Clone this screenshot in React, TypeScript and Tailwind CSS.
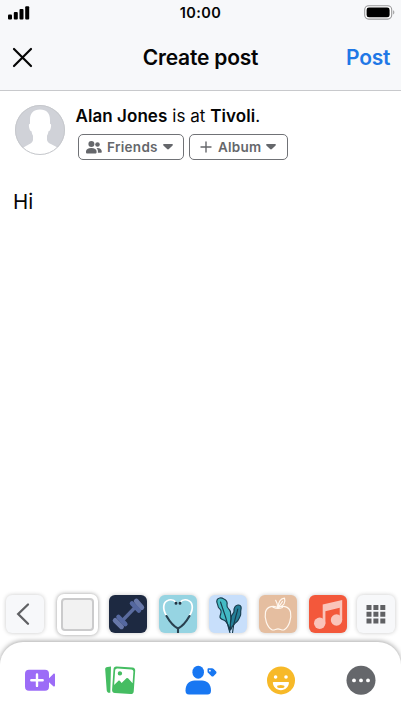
import type { ReactNode } from "react";

function StatusBar() {
  return (
    <div className="relative flex h-[26px] items-center justify-between pl-2 pr-[6px]">
      <svg width="22" height="14" viewBox="0 0 22 14" className="mt-[-1px]">
        <rect x="0" y="8.5" width="4" height="5" rx="1" />
        <rect x="5.8" y="6" width="4" height="7.5" rx="1" />
        <rect x="11.5" y="3" width="4" height="10.5" rx="1" />
        <rect x="17.2" y="0.3" width="4" height="13.2" rx="1" />
      </svg>
      <span className="absolute inset-x-0 text-center text-[14.5px] font-semibold leading-[26px] tracking-[0.45px]">
        10:00
      </span>
      <svg width="31" height="15" viewBox="0 0 31 15" className="mt-[-2px]">
        <rect x="0.7" y="0.7" width="27" height="13.4" rx="4" fill="#fff" stroke="#98989a" strokeWidth="1.1" />
        <rect x="2.6" y="2.5" width="23" height="9.8" rx="2.4" fill="#000" />
        <path d="M29.2 5.2c1.5.6 1.5 3.8 0 4.4z" fill="#98989a" />
      </svg>
    </div>
  );
}

function Header() {
  return (
    <header className="h-[91px] border-b border-[#c8c9cc] bg-[#f7f8fa]">
      <StatusBar />
      <div className="relative flex h-[64px] items-center justify-between pl-[12px] pr-[11px]">
        <button aria-label="Close" className="mt-[-1px]">
          <svg width="21" height="21" viewBox="0 0 21 21" fill="none" stroke="#050505" strokeWidth="2.2" strokeLinecap="round">
            <path d="M2 2l17 17M19 2L2 19" />
          </svg>
        </button>
        <h1 className="pointer-events-none absolute inset-x-0 text-center text-[21px] font-semibold leading-[64px] tracking-[-0.2px]">
          Create post
        </h1>
        <button className="text-[21px] font-semibold tracking-[-0.3px] text-[#1f78e6]">Post</button>
      </div>
    </header>
  );
}

function Caret() {
  return (
    <svg width="10" height="6" viewBox="0 0 10 6" fill="#65676b">
      <path d="M1 0h8c.9 0 1.2.8.6 1.4L5.9 5.1c-.5.5-1.3.5-1.8 0L.4 1.4C-.2.8.1 0 1 0z" />
    </svg>
  );
}

function Author() {
  return (
    <section className="flex pl-[15px] pt-[14px]">
      <svg width="50" height="50" viewBox="0 0 50 50" className="shrink-0">
        <defs>
          <clipPath id="avatar">
            <circle cx="25" cy="25" r="25" />
          </clipPath>
        </defs>
        <g clipPath="url(#avatar)">
          <rect width="50" height="50" fill="#d0d2d8" />
          <path
            fill="#fff"
            d="M25 4.5C18.2 4.5 14.800 8.5 15 15.5v3.200c-1.400.2-1.300 2-.7 4.500.5 1.800 1.200 2.900 2.200 3.100.3 1.900.8 3.300 1.500 4.500v4.200c-.5 4-6 4.500-11.500 9V52h38v-8c-5.500-4.500-12-5-12.500-9v-4.200c.7-1.200 1.200-2.600 1.500-4.500 1-.2 1.700-1.300 2.200-3.100.6-2.500.7-4.300-.7-4.500v-3.200c.2-7-3.200-11-10-11z"
          />
        </g>
        <circle cx="25" cy="25" r="24.5" fill="none" stroke="#c6c8cc" />
      </svg>
      <div className="pl-[11px]">
        <p className="ml-[-0.5px] text-[17px] leading-[22px] tracking-[0.06px]">
          <b className="font-semibold">Alan Jones</b> is at <b className="font-semibold">Tivoli</b>.
        </p>
        <div className="ml-[2px] mt-[7px] flex gap-[5px] text-[13.5px] font-semibold text-[#65676b]">
          <button className="flex h-[26px] w-[106px] items-center rounded-[5px] border-[1.5px] border-[#707276] pl-[7px]">
            <svg width="16" height="13" viewBox="0 0 16 13" fill="#65676b">
              <circle cx="5.4" cy="3" r="3" />
              <circle cx="11.5" cy="3.5" r="2.3" />
              <path d="M0 10.5C0 8.3 2 6.9 5.3 6.900s5.300 1.400 5.300 3.600v.7c0 .8-.5 1.300-1.300 1.300h-8C.5 12.500 0 12 0 11.200z" />
              <path d="M10.5 7c3.400-.4 5.300 1.400 5.300 3.700 0 .7-.4 1.100-1 1.100h-3c.4-1.900 0-3.500-1.300-4.800z" />
            </svg>
            <span className="ml-[5px] mr-[5px] tracking-[0.3px]">Friends</span>
            <Caret />
          </button>
          <button className="flex h-[26px] w-[99px] items-center rounded-[5px] border-[1.5px] border-[#707276] pl-[10px]">
            <svg width="12" height="12" viewBox="0 0 12 12" fill="none" stroke="#65676b" strokeWidth="1.4" strokeLinecap="round">
              <path d="M6 1v10M1 6h10" />
            </svg>
            <span className="ml-[6px] mr-[5px] tracking-[0.25px]">Album</span>
            <Caret />
          </button>
        </div>
      </div>
    </section>
  );
}

function Tile({ className, children }: { className: string; children?: ReactNode }) {
  return (
    <button className={`h-[38px] w-[38px] shrink-0 overflow-hidden rounded-[6px] shadow-[0_0_4px_rgba(0,0,0,0.22)] ${className}`}>
      <svg width="38" height="38" viewBox="0 0 38 38" fill="none">
        {children}
      </svg>
    </button>
  );
}

function Backgrounds() {
  return (
    <div className="flex h-[48px] items-center pl-[6px]">
      <Tile className="bg-[#f7f8fa]">
        <path d="M22 9.500L12.200 19l9.800 9.700" stroke="#606164" strokeWidth="2.3" strokeLinecap="round" />
      </Tile>
      <button aria-label="No background" className="ml-[13px] h-[41px] w-[41px] shrink-0 rounded-[7px] bg-white p-[4px] shadow-[0_0_4px_rgba(0,0,0,0.4)]">
        <span className="block h-full w-full rounded-[4px] border-2 border-[#cbcbcc] bg-[#f2f2f2]" />
      </button>
      <Tile className="ml-[11px] bg-[#1d2941]">
        <path d="M13.500 25.500L26 12.500" stroke="#5a6b9e" strokeWidth="3.4" />
        <path d="M6.200 25.500l6.300 6.200M27.300 6.200l5.400 6.300" stroke="#6878a9" strokeWidth="5" strokeLinecap="round" />
        <path d="M9.500 22l6.800 7M23 8.500l6.800 7" stroke="#5568a0" strokeWidth="4.6" strokeLinecap="round" />
      </Tile>
      <Tile className="ml-[12px] bg-[#96d4e2]">
        <g strokeLinecap="round" strokeLinejoin="round">
          <path d="M17 7.500C13.500 2.800 5.700 4.500 4.800 10.800c-.5 3.500.7 6.700 2.700 10M21 7.500c3.500-4.700 11.300-3 12.200 3.300.5 3.500-.7 6.700-2.700 10" stroke="#fff" strokeWidth="1.7" />
          <path d="M7.500 21c3 5.300 6.500 10 11.500 12.500 5-2.500 8.500-7.200 11.500-12.500M19 33.500V39" stroke="#29404f" strokeWidth="2.1" />
          <path d="M17 8.100v.3M21 8.100v.3" stroke="#243443" strokeWidth="2.8" />
        </g>
      </Tile>
      <Tile className="ml-[12px] bg-[#c8dffb]">
        <g stroke="#173b4c" strokeWidth="1.15" strokeLinejoin="round" strokeLinecap="round">
          <path d="M21.500 35c-.8-6 .3-10 1-14 .5-2 2.600-2.500 2.500-4.700-.2-3.300 1-5.800 4-6.300 3-.4 3.800 2.500 2.800 5.500-.5 2 .7 3.500-.8 6-.9 1.500-1.200 3.500-3.500 5.500-2 1.700-4.500 3.500-6 8z" fill="#247f98" />
          <path d="M20.500 35c-.8-4-1.800-7.200-4.700-9.500-2.500-1-5.200-1.400-4.800-4 .4-2.500 1.800-4 .8-6.200-.8-1.800-2.600-2-2.800-4.300C8.800 8.900 7 7.500 8 5c1-2.200 4.300-2.700 6.500-1.300C17.500 5 18.700 7 18 10c-.5 2.500 1 3.500 2.500 5 1.900 2 .8 4 1.200 6 .6 3.500-.8 8-.8 14z" fill="#43bac4" />
          <path d="M11.500 7c3 8 5.500 15 9.500 31M28.800 14c-1.500 7-4.500 13-5.300 24" />
        </g>
      </Tile>
      <Tile className="ml-[12px] bg-[#e5bea0]">
        <g stroke="#fff7ef" strokeWidth="1.2" strokeLinecap="round" strokeLinejoin="round">
          <path d="M19 12.800c-3.500-2.600-11-2-12.500 4.200-1.300 6.500 1.500 15 6.300 17.700 1.900 1.100 4-.9 6.200-.9s4.300 2 6.200.9c4.800-2.700 7.600-11.200 6.300-17.700-1.500-6.200-9-6.800-12.500-4.200z" />
          <path d="M14 12.300c2.500 1.200 7 1.300 9.500.2M18.700 12.500c-.1-3-.5-5-2-7.200M19.700 12c-.8-4.600 1.500-8.300 5.800-8.800 1.500 4.500-1 8-5.800 8.800zM20 11.500L23.500 6.500" />
        </g>
      </Tile>
      <Tile className="ml-[12px] bg-[#f3583b]">
        <g fill="#fac4ba">
          <circle cx="10.7" cy="28.3" r="5.7" />
          <circle cx="27.5" cy="25" r="5.7" />
          <path d="M13.700 9.500L33.200 5v20h-2.500V12.700l-14.300 3.500v12.300h-2.700z" />
        </g>
      </Tile>
      <Tile className="ml-[10px] bg-[#f7f8fa]">
        <path d="M9.500 10h5v5h-5zM16.400 10h5v5h-5zM23.300 10h5v5h-5zM9.500 16.700h5v5h-5zM16.400 16.700h5v5h-5zM23.300 16.700h5v5h-5zM9.500 23.400h5v5h-5zM16.400 23.400h5v5h-5zM23.300 23.400h5v5h-5z" fill="#606164" />
      </Tile>
    </div>
  );
}

function Attachments() {
  return (
    <nav className="relative flex h-[70px] items-center justify-between rounded-t-[23px] bg-white px-[20px] pt-[6px] shadow-[0_-1px_5px_rgba(0,0,0,0.35)]">
      <svg width="40" height="40" viewBox="0 0 40 40">
        <rect x="5" y="9.7" width="24" height="21" rx="4" fill="#9c6cf7" />
        <path d="M29 18.200l4.300-4.200c.7-.7 1.700-.4 1.700.6v11c0 1-1 1.300-1.700.6L29 22.200z" fill="#9c6cf7" />
        <path d="M17 14.500v11.400M11.300 20.200h11.400" stroke="#fff" strokeWidth="2.4" strokeLinecap="round" />
      </svg>
      <svg width="40" height="40" viewBox="0 0 40 40">
        <path d="M11 6.500L7.500 7C5.900 7.200 5 8 5.200 9.600l1.500 20.600c.1 1.500 1 2.600 2.600 2.600h1z" fill="#45bd62" />
        <g transform="rotate(4 24 20)">
          <rect x="12.8" y="7" width="21.7" height="26.5" rx="3" fill="#45bd62" />
          <path d="M14.500 11.200c0-1.500.8-2.300 2.300-2.300h13.700c1.500 0 2.300.8 2.300 2.300v11.500l-4.600-4.500c-.6-.7-1.300-.7-1.900 0l-4.500 5-1.700-2c-.5-.6-1.100-.6-1.600 0l-4 4.500z" fill="#fff" />
          <circle cx="19.500" cy="13.700" r="2.200" fill="#45bd62" />
        </g>
      </svg>
      <svg width="40" height="40" viewBox="0 0 40 40" fill="#1877f2">
        <ellipse cx="17.2" cy="12.2" rx="5.8" ry="6.5" />
        <path d="M4.500 30.500c0-6.500 4-10 9-10H21c5 0 9 3.500 9 10 0 2.500-1 3.900-3.500 3.900H8c-2.500 0-3.500-1.400-3.500-3.900z" />
        <path d="M27.700 8.300h3.300c.7 0 1.200.2 1.700.7l2.200 2.200c.8.8.8 1.700 0 2.500l-2.200 2.300c-.8.8-1.600.8-2.400 0l-3-2.900c-.5-.5-.8-1-.8-1.700V9.600c0-.8.4-1.300 1.200-1.300z" />
        <circle cx="28.900" cy="10.700" r="0.900" fill="#fff" />
      </svg>
      <svg width="40" height="40" viewBox="0 0 40 40">
        <circle cx="20" cy="20.400" r="14" fill="#f7b928" />
        <circle cx="14.600" cy="17" r="1.800" fill="#fff" />
        <circle cx="25" cy="17" r="1.800" fill="#fff" />
        <path d="M11.800 22.600c0-.5.300-.7.800-.7h14.600c.5 0 .8.200.8.700-.5 4.800-3.700 7.600-8.100 7.600s-7.600-2.800-8.100-7.600z" fill="#fff" />
        <ellipse cx="19.800" cy="26.500" rx="3.700" ry="1.500" fill="#f7b928" />
      </svg>
      <svg width="40" height="40" viewBox="0 0 40 40">
        <circle cx="20" cy="20.300" r="14.500" fill="#65676b" />
        <g fill="#fff">
          <circle cx="13" cy="20.400" r="1.900" />
          <circle cx="20" cy="20.400" r="1.900" />
          <circle cx="27" cy="20.400" r="1.900" />
        </g>
      </svg>
    </nav>
  );
}

export default function App() {
  return (
    <div className="flex h-[712px] w-[401px] flex-col overflow-hidden bg-white font-['Inter',sans-serif] text-[#050505]">
      <Header />
      <Author />
      <p className="ml-[13px] mt-[29px] flex-1 text-[20.5px] leading-[26px]">Hi</p>
      <Backgrounds />
      <div className="h-[4px]" />
      <Attachments />
    </div>
  );
}
